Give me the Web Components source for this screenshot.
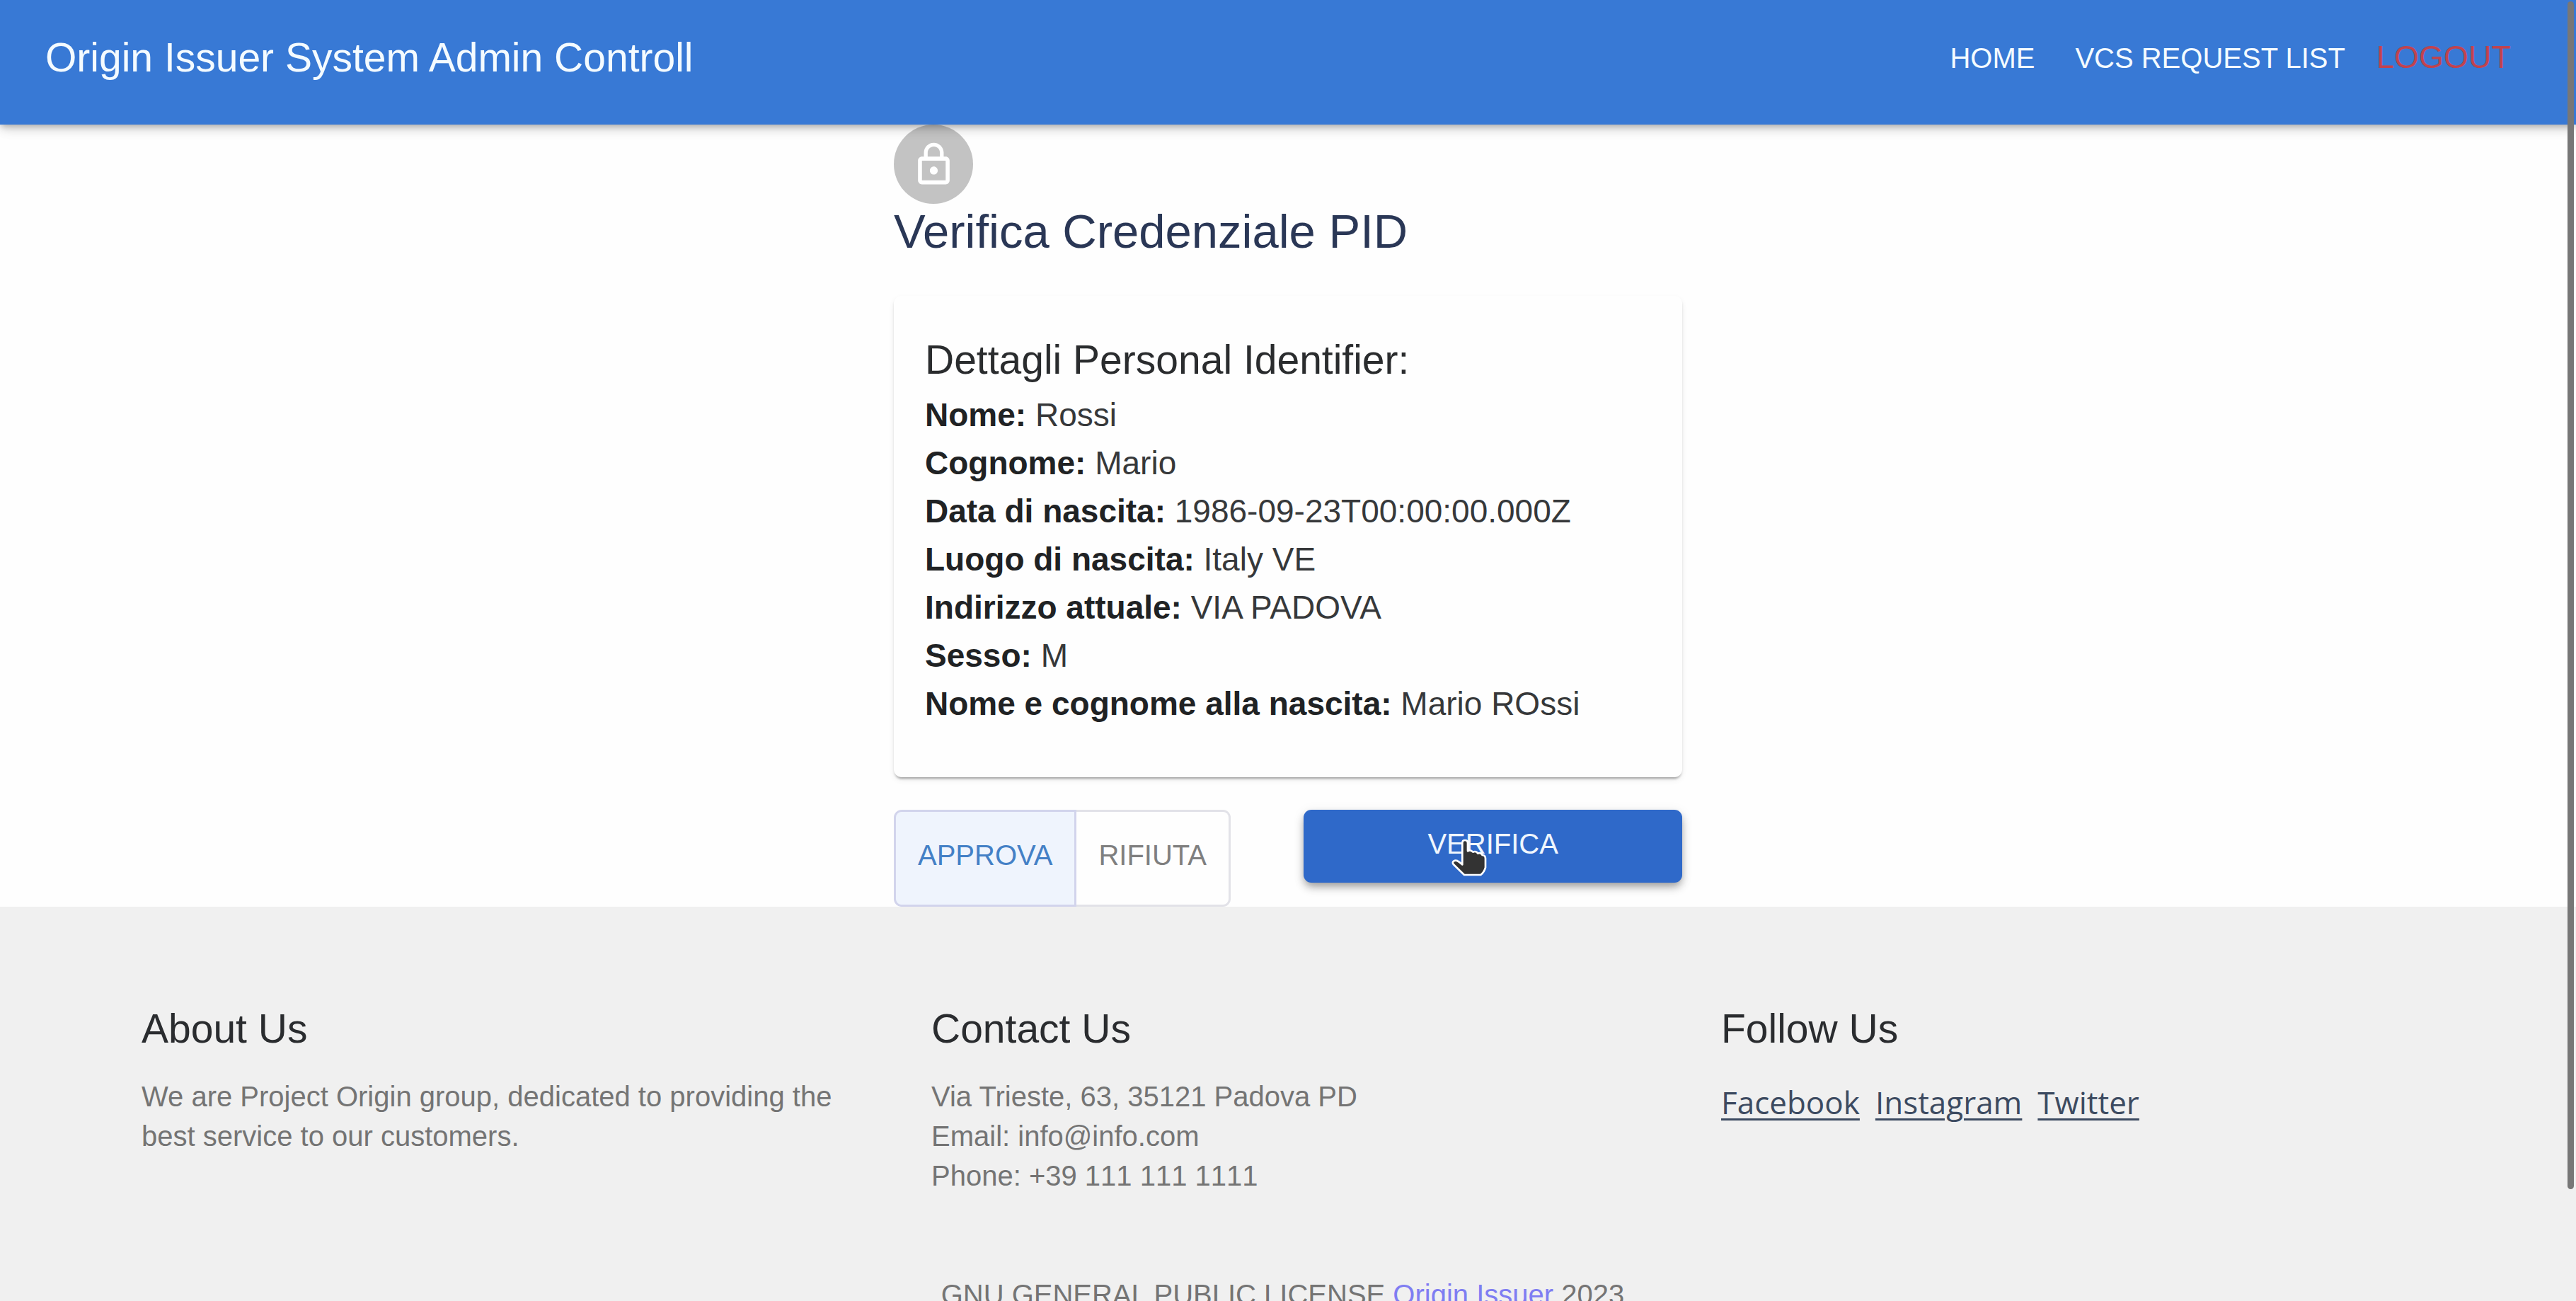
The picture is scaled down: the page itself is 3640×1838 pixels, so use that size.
<!DOCTYPE html>
<html lang="it">
<head>
<meta charset="utf-8">
<title>Origin Issuer System Admin Controll</title>
<style>
  html { scrollbar-width: none; }
  body {
    margin: 0;
    background: #fefefe;
    color: #2a2c2e;
    font-family: "Liberation Sans", Arial, sans-serif;
    --primary: #3879d5;
    --primary-dark: #2f69c9;
    --title-size: 57px;
    --body-size: 46px;
    --small-size: 40px;
  }
</style>
</head>
<body>
<origin-app></origin-app>

<script>
const define = (name, html) => {
  const template = document.createElement('template');
  template.innerHTML = html;
  customElements.define(name, class extends HTMLElement {
    constructor() {
      super();
      this.attachShadow({ mode: 'open' }).append(template.content.cloneNode(true));
    }
  });
};

/* Header */
define('app-header', `
  <style>
    :host { display: block; position: relative; z-index: 1; }
    header {
      display: flex; align-items: center; justify-content: space-between;
      height: 162px; padding: 0 92px 14px 64px;
      background: var(--primary); color: #f4fbff;
      box-shadow: 0 4px 8px -2px rgba(0,0,0,.22), 0 6px 14px rgba(0,0,0,.13), 0 3px 22px rgba(0,0,0,.08);
    }
    .brand { font-size: var(--title-size); line-height: 90px; }
    nav { display: flex; align-items: baseline; gap: 31px; }
  </style>
  <header>
    <div class="brand"><slot name="brand"></slot></div>
    <nav><slot></slot></nav>
  </header>`);

customElements.define('nav-link', class extends HTMLElement {
  connectedCallback() {
    if (this.shadowRoot) return;
    this.attachShadow({ mode: 'open' }).innerHTML = `
      <style>
        :host { display: block; }
        a { display: block; padding: 0 13px; font-size: var(--small-size); line-height: 68px; color: inherit; text-decoration: none; }
        :host([kind="logout"]) a { padding: 0; font-size: 45px; color: #c0434f; }
      </style>
      <a href="${this.getAttribute('href')}"><slot></slot></a>`;
  }
});

/* Main column */
define('lock-avatar', `
  <style>
    :host { display: flex; align-items: center; justify-content: center;
      width: 112px; height: 112px; border-radius: 50%; background: #c3c3c3; }
    svg { width: 67px; height: 67px; fill: #fff; }
  </style>
  <svg viewBox="0 0 24 24" aria-hidden="true"><path d="M12 17c1.1 0 2-.9 2-2s-.9-2-2-2-2 .9-2 2 .9 2 2 2zm6-9h-1V6c0-2.76-2.24-5-5-5S7 3.24 7 6v2H6c-1.1 0-2 .9-2 2v10c0 1.1.9 2 2 2h12c1.1 0 2-.9 2-2V10c0-1.1-.9-2-2-2zM8.9 6c0-1.71 1.39-3.1 3.1-3.1s3.1 1.39 3.1 3.1v2H8.9V6zM18 20H6V10h12v10z"/></svg>`);

define('detail-card', `
  <style>
    :host { display: block; padding: 46px 44px 70px; border-radius: 11px; background: #fefefe;
      box-shadow: 0 5px 3px -3px rgba(0,0,0,.22), 0 3px 3px rgba(0,0,0,.1), 0 4px 8px rgba(0,0,0,.07); }
    h2 { margin: 0; font-size: var(--title-size); line-height: 88px; font-weight: 400; }
  </style>
  <h2><slot name="heading"></slot></h2>
  <slot></slot>`);

customElements.define('detail-row', class extends HTMLElement {
  connectedCallback() {
    if (this.shadowRoot) return;
    this.attachShadow({ mode: 'open' }).innerHTML = `
      <style>
        :host { display: block; font-size: var(--body-size); line-height: 68px; color: #36383a; }
        b { color: #202224; }
      </style>
      <b>${this.getAttribute('label')}:</b> <slot></slot>`;
  }
});

define('decision-toggle', `
  <style>
    :host { display: flex; }
    button {
      margin: 0; padding: 27px 31px 35px; border: 3px solid #e2e2e8; background: #fefefe; color: #7f7f7f;
      font-family: inherit; font-size: var(--small-size); line-height: 69px; border-radius: 0 11px 11px 0; border-left: 0;
    }
    button[aria-pressed="true"] {
      background: #eff4fd; color: #4480c6; border: 3px solid #d2d4ec; border-radius: 11px 0 0 11px;
    }
  </style>
  <button type="button" aria-pressed="true">APPROVA</button>
  <button type="button" aria-pressed="false">RIFIUTA</button>`);

define('verify-button', `
  <style>
    :host { display: block; position: relative; }
    button {
      display: block; width: 100%; margin: 0; padding: 14px 22px 20px; border: 0; border-radius: 11px;
      background: var(--primary-dark); color: #f0f6fd; font-family: inherit; font-size: var(--small-size); line-height: 69px;
      box-shadow: 0 6px 11px -3px rgba(0,0,0,.28), 0 8px 14px rgba(0,0,0,.14), 0 3px 18px rgba(0,0,0,.08);
    }
    svg { position: absolute; left: 39%; top: 41px; width: 50px; height: 53px; pointer-events: none; }
  </style>
  <button type="button"><slot></slot></button>
  <svg viewBox="0 0 150 159" aria-hidden="true">
    <path d="M46 18Q46 6 57 6Q69 6 69 18V52Q80 44 91 56Q104 50 112 62Q124 57 131 69Q144 70 144 84V122Q139 141 124 153H54L8 108Q2 99 10 94Q20 88 32 98L46 109Z" fill="#333" stroke="#fff" stroke-width="8" stroke-linejoin="round"/>
  </svg>`);

/* Footer */
define('footer-section', `
  <style>
    :host { display: block; }
    h2 { margin: 0 0 23px; font-size: var(--title-size); line-height: 90px; font-weight: 400; color: #2a2c2f; }
    div { font-size: var(--small-size); line-height: 56px; color: #747474; }
    ::slotted(.phone) { font-kerning: none; }
  </style>
  <h2><slot name="heading"></slot></h2>
  <div><slot></slot></div>`);

define('social-links', `
  <style>
    :host { display: flex; gap: 22px; font-family: "Open Sans", "Noto Sans", sans-serif; font-size: 44px; line-height: 72px; }
    a { color: #3c4a60; text-decoration-thickness: 3px; text-underline-offset: 6px; }
  </style>
  <a href="#facebook">Facebook</a><a href="#instagram">Instagram</a><a href="#twitter">Twitter</a>`);

define('app-footer', `
  <style>
    :host { display: block; background: #f0f0f0; padding: 127px 204px 127px 200px; }
    .columns { display: grid; grid-template-columns: repeat(3, 1fr); gap: 112px; }
    p { margin: 112px 0 0; text-align: center; font-size: var(--small-size); line-height: 56px; color: #747474; }
    a { color: #7f7df2; }
  </style>
  <footer>
    <div class="columns">
      <footer-section><span slot="heading">About Us</span>We are Project Origin group, dedicated to providing the best service to our customers.</footer-section>
      <footer-section><span slot="heading">Contact Us</span>Via Trieste, 63, 35121 Padova PD<br>Email: info@info.com<br><span class="phone">Phone: +39 111 111 1111</span></footer-section>
      <footer-section><span slot="heading">Follow Us</span><social-links></social-links></footer-section>
    </div>
    <p>GNU GENERAL PUBLIC LICENSE <a href="#origin">Origin Issuer</a> 2023.</p>
  </footer>`);

/* Thin overlay scroll thumb on the right edge */
define('scroll-thumb', `
  <style>
    :host { position: fixed; z-index: 2; top: 2px; right: 3px; width: 9px; height: 1678px; border-radius: 5px; background: #777; }
  </style>`);

define('origin-app', `
  <style>
    :host { display: block; }
    main { max-width: 1114px; margin: 0 auto; }
    h1 { margin: 0 0 52px; font-size: 67px; line-height: 78px; font-weight: 400; color: #2a3756; }
    .actions { display: flex; justify-content: space-between; align-items: flex-start; margin-top: 46px; }
    verify-button { flex: 0 0 48%; }
  </style>
  <app-header>
    <span slot="brand">Origin Issuer System Admin Controll</span>
    <nav-link href="#home">HOME</nav-link>
    <nav-link href="#requests">VCS REQUEST LIST</nav-link>
    <nav-link href="#logout" kind="logout">LOGOUT</nav-link>
  </app-header>
  <main>
    <lock-avatar></lock-avatar>
    <h1>Verifica Credenziale PID</h1>
    <detail-card>
      <span slot="heading">Dettagli Personal Identifier:</span>
      <detail-row label="Nome">Rossi</detail-row>
      <detail-row label="Cognome">Mario</detail-row>
      <detail-row label="Data di nascita">1986-09-23T00:00:00.000Z</detail-row>
      <detail-row label="Luogo di nascita">Italy VE</detail-row>
      <detail-row label="Indirizzo attuale">VIA PADOVA</detail-row>
      <detail-row label="Sesso">M</detail-row>
      <detail-row label="Nome e cognome alla nascita">Mario ROssi</detail-row>
    </detail-card>
    <div class="actions">
      <decision-toggle></decision-toggle>
      <verify-button>VERIFICA</verify-button>
    </div>
  </main>
  <app-footer></app-footer>
  <scroll-thumb></scroll-thumb>`);
</script>
</body>
</html>
